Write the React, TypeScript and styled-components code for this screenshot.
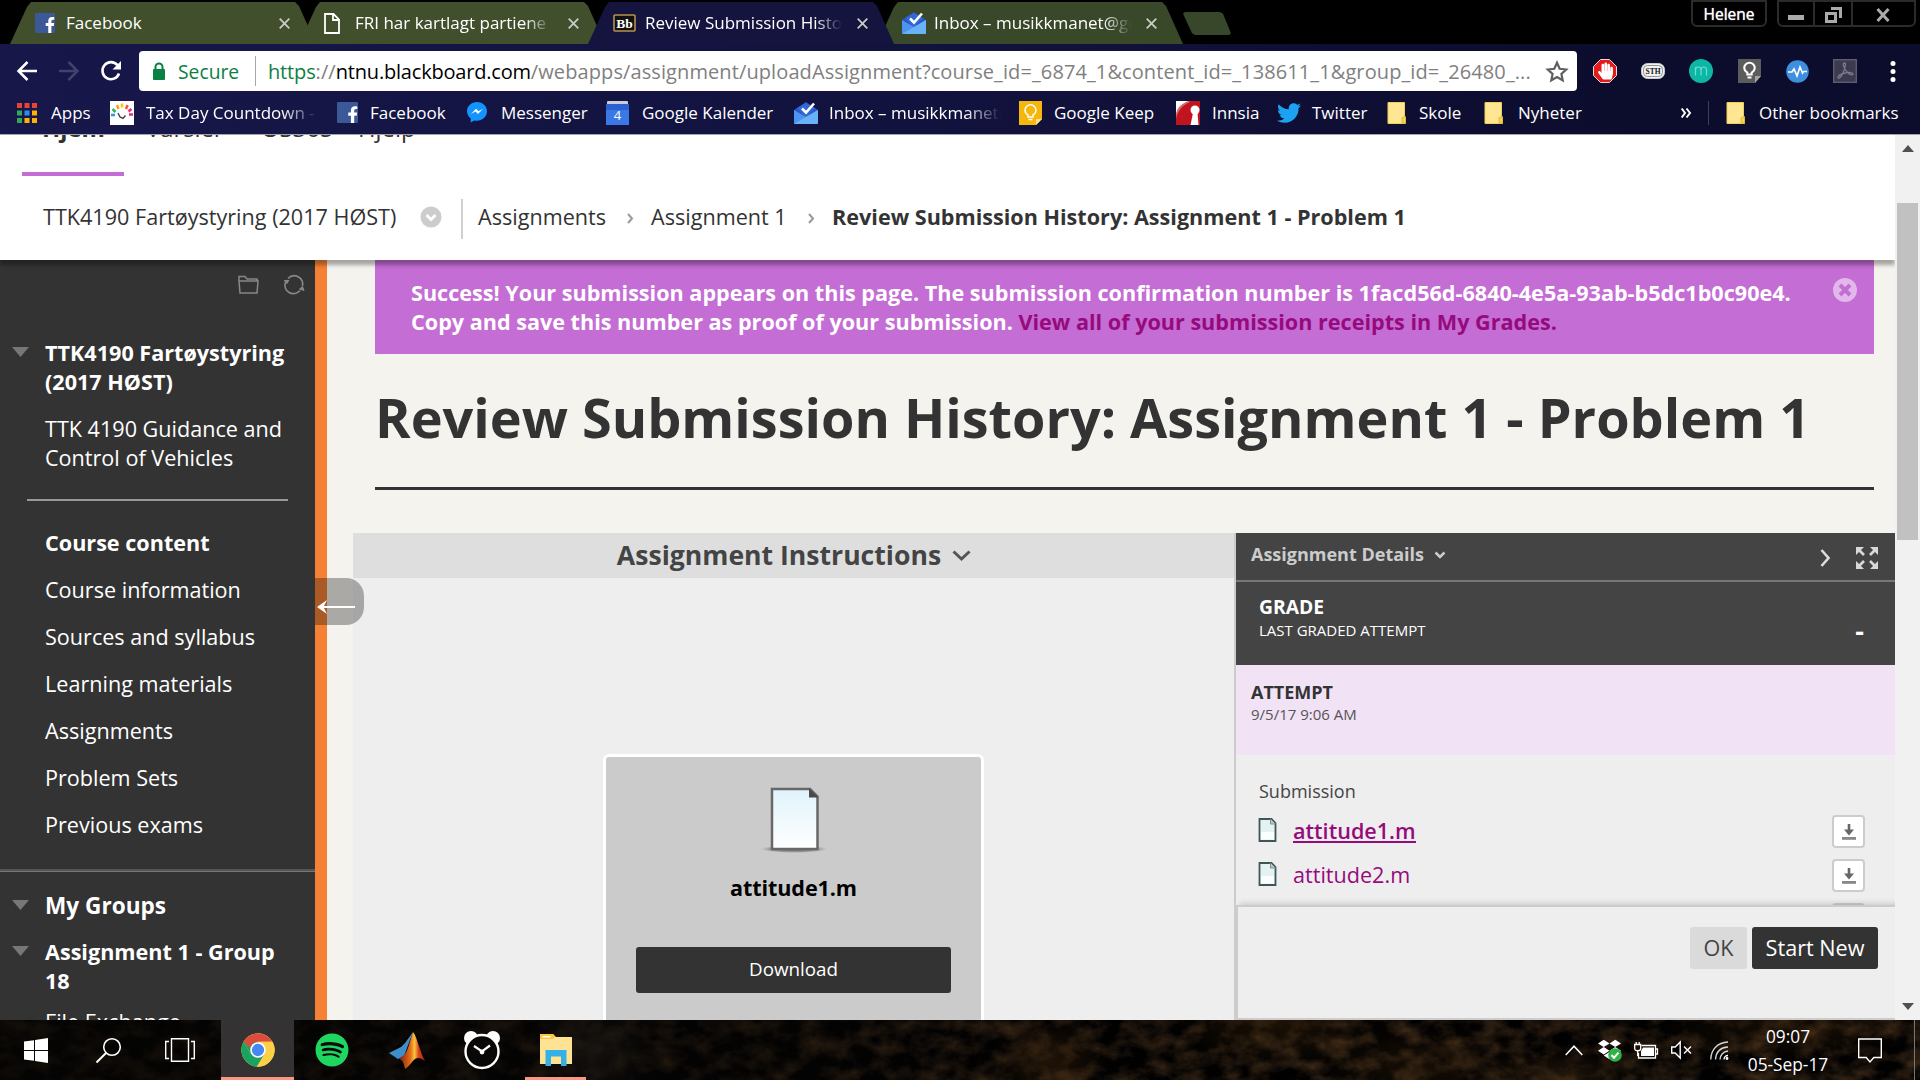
import React from 'react';
import styled, { createGlobalStyle, css } from 'styled-components';
import { FaTwitter, FaSpotify, FaDropbox, FaHandPaper, FaFacebookF } from 'react-icons/fa';

const Global = createGlobalStyle`
  * { box-sizing: border-box; }
  html, body { margin: 0; padding: 0; background: #000; overflow: hidden; }
  body { font-family: "Open Sans", "Noto Sans", sans-serif; }
  svg { display: block; flex: none; overflow: visible; }
  h1, h2, p, ul { margin: 0; padding: 0; font-weight: inherit; }
`;

const Screen = styled.div`
  width: 1920px;
  height: 1080px;
  display: flex;
  flex-direction: column;
  overflow: hidden;
`;

/* ---------- Browser frame ---------- */

const TabStrip = styled.div`
  height: 44px;
  background: #000;
  display: flex;
  align-items: flex-start;
  padding: 2px 4px 0 10px;
`;

const Tab = styled.div<{ $active?: boolean; $order: number }>`
  width: 307px;
  height: 42px;
  margin-right: -18px;
  padding: 0 27px 0 25px;
  display: flex;
  align-items: center;
  position: relative;
  z-index: ${(p) => p.$order};
  color: #fff;
  background: ${(p) => (p.$active ? '#14143f' : p.$order === 1 ? '#3a482a' : '#414f2c')};
  clip-path: polygon(0 100%, 17px 5px, 21px 0, 285px 0, 289px 4px, 306px 100%);
`;

const TabIcon = styled.span<{ $w: number }>`
  width: ${(p) => p.$w}px;
  flex: none;
`;

const TabTitle = styled.span<{ $fade?: boolean }>`
  width: 199px;
  flex: none;
  overflow: hidden;
  white-space: nowrap;
  font-size: 17px;
  line-height: 24px;
  ${(p) =>
    p.$fade &&
    css`
      mask-image: linear-gradient(to right, #000 170px, transparent 197px);
    `}
`;

const TabClose = styled.span`
  margin-left: auto;
  flex: none;
`;

const NewTab = styled.div`
  width: 48px;
  height: 23px;
  margin: 10px 0 0 17px;
  background: #38462a;
  clip-path: polygon(0 8%, 2px 0, 37px 0, 40px 8%, 48px 92%, 46px 100%, 12px 100%, 9px 92%);
`;

const UserBadge = styled.div`
  margin: -2px 0 0 auto;
  width: 76px;
  height: 27px;
  border: 2px solid #2b2b2b;
  border-radius: 0 0 6px 6px;
  color: #fff;
  font-size: 15.5px;
  font-weight: 500;
  line-height: 25px;
  text-align: center;
  text-shadow: 0 0 1px #fff;
`;

const WindowButtons = styled.div`
  margin: -2px 0 0 10px;
  width: 139px;
  height: 27px;
  display: flex;
  border: 2px solid #2b2b2b;
  border-radius: 0 0 6px 6px;
`;

const WindowButton = styled.div<{ $w: number; $drop?: number }>`
  width: ${(p) => p.$w}px;
  padding-top: ${(p) => p.$drop ?? 0}px;
  display: flex;
  align-items: center;
  justify-content: center;
  & + & { border-left: 2px solid #2b2b2b; }
`;

const Toolbar = styled.div`
  height: 54px;
  display: flex;
  align-items: center;
  padding: 0 12px 0 16px;
  background: linear-gradient(to right, #17174a, #12123e 50%, #0c0c2d 85%);
`;

const NavButtons = styled.div`
  width: 123px;
  display: flex;
  gap: 20px;
`;

const AddressBar = styled.div`
  width: 1438px;
  height: 40px;
  flex: none;
  border-radius: 4px;
  background: #fff;
  display: flex;
  align-items: center;
  padding: 0 8px 0 14px;
  font-size: 20px;
  white-space: nowrap;
  color: #808080;
`;

const Secure = styled.span`
  width: 77px;
  margin-left: 13px;
  color: #0b8043;
  font-size: 19.3px;
`;

const AddressDivider = styled.span`
  width: 1px;
  height: 30px;
  background: #a8a8a8;
  margin-right: 12px;
`;

const Url = styled.span`
  width: 1278px;
  letter-spacing: 0.1px;
`;

const Scheme = styled.span`
  color: #0b8043;
  letter-spacing: -0.15px;
`;

const Host = styled.span`
  color: #000;
  letter-spacing: -0.2px;
`;

const Extensions = styled.div`
  margin-left: 16px;
  display: flex;
  align-items: center;
  gap: 24px;
`;

const ExtensionSlot = styled.span`
  width: 24px;
  flex: none;
  display: flex;
  justify-content: center;
`;

const BookmarksBar = styled.div`
  height: 37px;
  padding: 0 20px 7px 17px;
  display: flex;
  align-items: center;
  color: #fff;
  font-size: 17px;
  line-height: 24px;
  border-bottom: 1px solid #a5a4ad;
  background: linear-gradient(to right, #17174a, #12123e 50%, #0c0c2d 85%);
`;

const Bookmark = styled.div<{ $w: number }>`
  width: ${(p) => p.$w}px;
  flex: none;
  display: flex;
  align-items: center;
  white-space: nowrap;
`;

const BookmarkIcon = styled.span<{ $w: number }>`
  width: ${(p) => p.$w}px;
  flex: none;
`;

const BookmarkLabel = styled.span<{ $fade?: number }>`
  position: relative;
  top: 0.5px;
  ${(p) =>
    p.$fade &&
    css`
      width: ${p.$fade}px;
      overflow: hidden;
      mask-image: linear-gradient(to right, #000 ${p.$fade - 36}px, transparent ${p.$fade}px);
    `}
`;

const Overflow = styled.span`
  width: 27px;
  margin-left: 78px;
`;

const BookmarkDivider = styled.span`
  width: 1px;
  height: 24px;
  margin-right: 18px;
  background: #3f3f5c;
`;

/* ---------- Page ---------- */

const Viewport = styled.div`
  height: 885px;
  display: flex;
  background: #f5f3ee;
`;

const PageColumn = styled.div`
  width: 1895px;
  display: flex;
  flex-direction: column;
  overflow: hidden;
`;

const PageHeader = styled.header`
  height: 125px;
  flex: none;
  position: relative;
  z-index: 3;
  background: #fff;
  box-shadow: 0 5px 4px rgba(0, 0, 0, 0.33);
  color: #333;
  font-size: 21.6px;
  line-height: 29px;
`;

const TopNav = styled.nav`
  height: 41px;
  padding: 0 0 0 22px;
  display: flex;
  font-size: 23.8px;
`;

const TopNavItem = styled.a<{ $w: number; $active?: boolean }>`
  width: ${(p) => p.$w}px;
  height: 62px;
  margin-top: -21px;
  padding-left: ${(p) => (p.$active ? 20 : 0)}px;
  font-weight: ${(p) => (p.$active ? 700 : 400)};
  border-bottom: ${(p) => (p.$active ? '4px solid #c46dd4' : 'none')};
`;

const NavGap = styled.span`
  width: 22px;
`;

const Breadcrumbs = styled.div`
  height: 84px;
  padding: 0 0 3px 43px;
  display: flex;
  align-items: center;
  white-space: nowrap;
`;

const CourseCrumb = styled.span`
  width: 377px;
`;

const CrumbDivider = styled.span`
  width: 2px;
  height: 40px;
  margin: 4px 15px 0 19px;
  background: #d0d0d0;
`;

const Crumb = styled.span<{ $w?: number; $strong?: boolean }>`
  ${(p) => p.$w && `width: ${p.$w}px;`}
  font-weight: ${(p) => (p.$strong ? 700 : 400)};
`;

const CrumbArrow = styled.span`
  width: 24px;
  padding-top: 4px;
`;

const PageBody = styled.div`
  height: 760px;
  display: flex;
  position: relative;
`;

const Sidebar = styled.aside`
  width: 327px;
  height: 760px;
  flex: none;
  overflow: hidden;
  background: #333;
  border-right: 12px solid #f48134;
  color: #fff;
  font-size: 21.6px;
  line-height: 29px;
`;

const SidebarTools = styled.div`
  height: 78px;
  padding: 15px 11px 0 0;
  display: flex;
  justify-content: flex-end;
  gap: 25px;
`;

const MenuHeading = styled.div<{ $mb: number; $big?: boolean }>`
  margin-bottom: ${(p) => p.$mb}px;
  padding-left: 12px;
  display: flex;
  gap: 16px;
  font-weight: 700;
  font-size: ${(p) => (p.$big ? 22.6 : 21.6)}px;
  svg { margin-top: 9px; }
`;

const MenuItem = styled.div<{ $bold?: boolean; $mb?: number }>`
  margin: 0 19px ${(p) => p.$mb ?? 18}px 45px;
  font-weight: ${(p) => (p.$bold ? 700 : 400)};
`;

const MenuRule = styled.div`
  height: 2px;
  margin: 0 27px 27px;
  background: #999;
`;

const SectionRule = styled.div`
  height: 3px;
  margin-bottom: 19px;
  background: #555;
  border-bottom: 1px solid #777;
`;

const CollapseHandle = styled.div`
  position: absolute;
  left: 315px;
  top: 318px;
  width: 49px;
  height: 47px;
  padding: 22px 0 0 2px;
  border-radius: 0 18px 18px 0;
  background: rgba(0, 0, 0, 0.3);
`;

const Content = styled.main`
  flex: 1;
  display: flex;
  flex-direction: column;
`;

const Banner = styled.div`
  width: 1499px;
  height: 94px;
  flex: none;
  margin-left: 48px;
  padding: 18px 17px 0 36px;
  display: flex;
  justify-content: space-between;
  background: #c46dd4;
  color: #fff;
  font-size: 21.6px;
  line-height: 29px;
  font-weight: 700;
  white-space: nowrap;
`;

const BannerLink = styled.a`
  color: #960a7d;
`;

const PageTitle = styled.h1`
  width: 1499px;
  height: 136px;
  flex: none;
  margin-left: 48px;
  padding-top: 26px;
  border-bottom: 3px solid #333;
  color: #333;
  font-size: 54px;
  line-height: 74px;
  font-weight: 700;
  white-space: nowrap;
`;

const Panels = styled.div`
  flex: 1;
  margin: 43px 0 0 26px;
  display: flex;
  min-height: 0;
`;

const Preview = styled.section`
  width: 881px;
  height: 487px;
  background: #eee;
  display: flex;
  flex-direction: column;
  align-items: center;
  overflow: hidden;
`;

const PreviewHeader = styled.h2`
  width: 100%;
  height: 45px;
  flex: none;
  margin-bottom: 176px;
  padding: 0 0 1px 1px;
  display: flex;
  align-items: center;
  justify-content: center;
  gap: 11px;
  background: #dedede;
  color: #444;
  font-size: 26.6px;
  line-height: 36px;
  font-weight: 700;
`;

const FileCard = styled.div`
  width: 381px;
  height: 320px;
  flex: none;
  padding-top: 30px;
  display: flex;
  flex-direction: column;
  align-items: center;
  border: 3px solid #fff;
  border-radius: 6px;
  background: #cbcbcb;
`;

const FileName = styled.div`
  margin-top: 20px;
  color: #000;
  font-size: 21.6px;
  line-height: 30px;
  font-weight: 700;
  letter-spacing: -0.1px;
`;

const DownloadButton = styled.button`
  width: 315px;
  height: 46px;
  margin-top: 44px;
  padding: 0 0 3px;
  border: 0;
  border-radius: 3px;
  background: #333;
  color: #fff;
  font: 400 18.8px "Open Sans", sans-serif;
`;

const Details = styled.section`
  width: 661px;
  height: 487px;
  border-left: 2px solid #ccc;
  background: #eee;
  display: flex;
  flex-direction: column;
  overflow: hidden;
`;

const DetailsHeader = styled.div`
  height: 49px;
  flex: none;
  padding: 0 17px 0 15px;
  display: flex;
  align-items: center;
  border-bottom: 2px solid #777;
  background: #444;
`;

const DetailsTitle = styled.span`
  flex: 1;
  padding-bottom: 4px;
  display: flex;
  align-items: center;
  gap: 10px;
  color: #ccc;
  font-size: 18px;
  line-height: 25px;
  font-weight: 700;
`;

const DetailsTools = styled.span`
  padding-top: 2px;
  display: flex;
  align-items: center;
  gap: 25px;
`;

const Grade = styled.div`
  height: 83px;
  flex: none;
  padding: 12px 31px 0 23px;
  display: flex;
  justify-content: space-between;
  background: #444;
  color: #fff;
`;

const GradeLabel = styled.div`
  font-size: 19.3px;
  line-height: 26px;
  font-weight: 700;
`;

const GradeNote = styled.div`
  font-size: 15px;
  line-height: 20px;
`;

const GradeValue = styled.div`
  padding-top: 19px;
  font-size: 27px;
  line-height: 36px;
  font-weight: 700;
`;

const Attempt = styled.div`
  height: 90px;
  flex: none;
  padding: 15px 0 0 15px;
  background: #f2e2f6;
  color: #333;
  font-size: 18px;
  line-height: 24px;
  font-weight: 700;
`;

const AttemptDate = styled.div`
  color: #555;
  font-size: 15px;
  line-height: 20px;
  font-weight: 400;
`;

const FileList = styled.div`
  height: 150px;
  flex: none;
  padding: 24px 30px 0 22px;
  overflow: hidden;
`;

const FileListLabel = styled.div`
  height: 30px;
  padding-left: 1px;
  color: #444;
  font-size: 18px;
  line-height: 25px;
`;

const FileRow = styled.div`
  height: 44px;
  display: flex;
  align-items: center;
  svg:first-child { margin-top: -3px; }
`;

const FileLink = styled.a<{ $current?: boolean }>`
  margin: -3px 0 0 16px;
  color: #960a7d;
  font-size: 21.6px;
  line-height: 29px;
  font-weight: ${(p) => (p.$current ? 600 : 400)};
  border-bottom: 2px solid ${(p) => (p.$current ? '#960a7d' : 'transparent')};
  height: 27px;
`;

const RowButton = styled.span`
  width: 33px;
  height: 33px;
  margin-left: auto;
  display: flex;
  align-items: center;
  justify-content: center;
  border: 2px solid #ccc;
  border-radius: 4px;
  background: #fff;
`;

const ButtonGlyph = styled.span`
  padding: 4px 0 0 1px;
`;

const DetailsFooter = styled.div`
  height: 115px;
  flex: none;
  padding: 20px 17px 0;
  display: flex;
  align-items: flex-start;
  justify-content: flex-end;
  gap: 5px;
  position: relative;
  border: 2px solid #ccc;
  border-right: 0;
  background: #eee;
  box-shadow: 4px -2px 5px rgba(0, 0, 0, 0.14);
`;

const FooterButton = styled.button<{ $w: number; $primary?: boolean }>`
  width: ${(p) => p.$w}px;
  height: 42px;
  padding: 0;
  border: 0;
  border-radius: 3px;
  background: ${(p) => (p.$primary ? '#333' : '#dadada')};
  color: ${(p) => (p.$primary ? '#fff' : '#444')};
  font: 400 21.6px/40px "Open Sans", sans-serif;
`;

const Scrollbar = styled.div`
  width: 25px;
  padding: 10px 2px;
  display: flex;
  flex-direction: column;
  align-items: center;
  background: #f1f1f1;
`;

const ScrollThumb = styled.div`
  width: 21px;
  height: 337px;
  margin: 51px 0 auto;
  background: #c1c1c1;
`;

/* ---------- Taskbar ---------- */

const TaskbarRoot = styled.div`
  height: 60px;
  display: flex;
  position: relative;
  overflow: hidden;
  background: #080706;
`;

const RockTexture = styled.svg`
  position: absolute;
  inset: 0;
`;

const TaskbarItems = styled.div`
  position: relative;
  width: 100%;
  display: flex;
  align-items: stretch;
  background:
    radial-gradient(60px 40px at 1050px 40px, rgba(86, 52, 16, 0.35), transparent),
    radial-gradient(110px 50px at 1280px 0, rgba(80, 50, 16, 0.35), transparent),
    radial-gradient(110px 40px at 1420px 45px, rgba(70, 44, 16, 0.3), transparent),
    radial-gradient(80px 30px at 1560px 58px, rgba(86, 58, 24, 0.35), transparent),
    radial-gradient(130px 30px at 1790px 10px, rgba(70, 44, 12, 0.3), transparent),
    radial-gradient(70px 50px at 590px 30px, rgba(44, 38, 32, 0.4), transparent);
`;

const TaskButton = styled.div<{ $w: number; $active?: boolean; $open?: boolean }>`
  width: ${(p) => p.$w}px;
  flex: none;
  display: flex;
  align-items: center;
  justify-content: center;
  background: ${(p) => (p.$active ? '#343232' : 'transparent')};
  border-top: 3px solid ${(p) => (p.$active ? '#343232' : 'transparent')};
  border-bottom: 3px solid ${(p) => (p.$active || p.$open ? '#fb9682' : 'transparent')};
`;

const TaskGap = styled.div`
  width: 5px;
  flex: none;
`;

const Tray = styled.div`
  margin-left: auto;
  display: flex;
  align-items: center;
  color: #fff;
`;

const TrayIcon = styled.span<{ $w: number }>`
  width: ${(p) => p.$w}px;
`;

const Clock = styled.div`
  width: 112px;
  margin-right: 14px;
  padding-top: 1px;
  text-align: center;
  font-size: 17.3px;
  line-height: 28px;
`;

const ShowDesktop = styled.div`
  width: 6px;
  height: 60px;
  margin-left: 32px;
  border-left: 1px solid #777;
`;

/* ---------- Drawings ---------- */

const Facebook = ({ w }: { w: number }) => (
  <svg width={w} height={w} viewBox="0 0 20 20">
    <rect width="20" height="20" rx="1" fill="#3b5998" />
    <g transform="translate(7 4)"><FaFacebookF size={16} color="#fff" /></g>
  </svg>
);
const CloseX = () => (
  <svg width="11" height="11" viewBox="0 0 11 11">
    <path d="M.7.7l9.6 9.6M10.3.7L.7 10.3" stroke="#c9cbc5" strokeWidth="1.8" />
  </svg>
);
const BlankPage = () => (
  <svg width="16" height="21" viewBox="0 0 16 21" fill="none" stroke="#fff" strokeWidth="1.8">
    <path d="M1 1h8.5l5.5 5.5v13.5H1zM9 1v6h6" />
  </svg>
);
const Blackboard = () => (
  <svg width="23" height="18" viewBox="0 0 23 18">
    <rect x="1" y="1" width="21" height="16" rx="1" fill="#111" stroke="#b8924b" strokeWidth="1.6" />
    <text x="11.5" y="13.5" fill="#fff" fontFamily="Liberation Serif, serif" fontSize="13.5" fontWeight="700" textAnchor="middle">Bb</text>
  </svg>
);
const InboxIcon = () => (
  <svg width="24" height="24" viewBox="0 0 24 24">
    <path d="M0 9L12 1l12 8v13a1 1 0 0 1-1 1H1a1 1 0 0 1-1-1z" fill="#2a56c6" />
    <path d="M3 7l9-5 9 5-9 10z" fill="#3367d6" />
    <path d="M0 9l12 7L24 9v13a1 1 0 0 1-1 1H1a1 1 0 0 1-1-1z" fill="#4d94f0" />
    <path d="M0 23L24 9v13l-1 1z" fill="#69b2f8" />
    <path d="M8 7.5l4 4 8-9" fill="none" stroke="#fff" strokeWidth="2.6" />
  </svg>
);
const AppsGrid = () => (
  <svg width="20" height="20" viewBox="0 0 20 20">
    {['#ea4335', '#ea4335', '#ea4335', '#34a853', '#2e8cf0', '#fbb405', '#34a853', '#fbb405', '#fbb405'].map((c, i) => (
      <rect key={i} x={(i % 3) * 7.5} y={Math.floor(i / 3) * 7.5} width="5" height="5" fill={c} />
    ))}
  </svg>
);
const TaxIcon = () => (
  <svg width="24" height="24" viewBox="0 0 24 24" fill="none" strokeWidth="2.6">
    <rect width="24" height="24" fill="#fff" />
    <path d="M7 4l1.5 4" stroke="#f9a01b" />
    <path d="M12 2.5v4" stroke="#f6c915" />
    <path d="M17.5 4L16 8" stroke="#f15a3a" />
    <path d="M2.5 8l3 3" stroke="#35b558" />
    <path d="M1 14h4" stroke="#2f9be8" />
    <path d="M21.5 8l-3 2.5" stroke="#e8317a" />
    <path d="M19 13.5h4" stroke="#e8317a" />
    <path d="M8 12l2 4 3 1.5 2.5-3" stroke="#444" strokeWidth="1.4" />
  </svg>
);
const MessengerIcon = () => (
  <svg width="20" height="21" viewBox="0 0 20 21">
    <path d="M10 0C4.5 0 0 4 0 9.200c0 3 1.5 5.5 3.700 7.200v4l3.600-2c.9.2 1.800.3 2.700.3 5.500 0 10-4.100 10-9.400S15.500 0 10 0z" fill="#1493ff" />
    <path d="M4 12l5-5.300 2.600 2.600L16 6.700 11 12 8.500 9.400z" fill="#fff" />
  </svg>
);
const CalendarIcon = () => (
  <svg width="23" height="24" viewBox="0 0 23 24">
    <rect x="1" width="21" height="4" rx="1" fill="#c9cdd4" />
    <path d="M0 3h23v21H0z" fill="#3b78e7" />
    <path d="M0 3h23v6H0z" fill="#2c5fd1" />
    <text x="11.5" y="19" fill="#fff" fontSize="13" textAnchor="middle">4</text>
  </svg>
);
const KeepIcon = () => (
  <svg width="23" height="24" viewBox="0 0 23 24">
    <path d="M0 0h23v18l-6 6H0z" fill="#f6b70c" />
    <path d="M23 18l-6 6v-6z" fill="#fde293" />
    <path d="M9 16v-2c-2-1.200-3-2.600-3-4.700a5.500 5.500 0 0 1 11 0c0 2.100-1 3.500-3 4.700v2zM9.500 18.500h4" fill="none" stroke="#fff" strokeWidth="1.5" />
  </svg>
);
const InnsiaIcon = () => (
  <svg width="24" height="24" viewBox="0 0 24 24">
    <rect width="24" height="24" fill="#c2141f" />
    <path d="M0 14C1 6 7 2 13 0H0z" fill="#fff" />
    <path d="M13 0C7 2 1 6 0 14v4C2 9 7 4 14 1z" fill="#e3a0a6" opacity=".6" />
    <circle cx="19" cy="9" r="4.500" fill="#fff" />
    <path d="M17 12h4.500l1 12h-8z" fill="#fff" />
  </svg>
);
const FolderIcon = () => (
  <svg width="18" height="22" viewBox="0 0 18 22">
    <path d="M0 .5h16.500v14l1 1.500v5.500H0z" fill="#fee693" stroke="#eed058" />
    <path d="M14 21v-5.500l3.500-1V21z" fill="#f6d44f" stroke="#d9b43a" strokeWidth=".8" />
  </svg>
);
const extensions = [
  <svg width="24" height="24" viewBox="0 0 24 24">
    <path d="M7.500.5h9l7 7v9l-7 7h-9l-7-7v-9z" fill="#e31b1b" stroke="#f3dada" />
    <g transform="translate(4 3.500)"><FaHandPaper size={17} color="#fff" /></g>
  </svg>,
  <svg width="24" height="16" viewBox="0 0 24 16">
    <rect x=".5" y=".5" width="23" height="15" rx="6" fill="#f2f2f2" stroke="#ccc" />
    <rect x="2.500" y="2.500" width="19" height="11" rx="4" fill="none" stroke="#777" strokeWidth=".8" />
    <text x="12" y="10.800" fill="#111" fontFamily="Liberation Serif, serif" fontSize="7.500" fontWeight="700" textAnchor="middle">STH</text>
  </svg>,
  <svg width="24" height="24" viewBox="0 0 24 24">
    <circle cx="12" cy="12" r="12" fill="#0cb7a6" />
    <path d="M6.500 16.500V8M6.500 11c0-4 5.500-4 5.500 0v5.500M12 11c0-4 5.500-4 5.500 0v5.500" fill="none" stroke="#74dccf" strokeWidth="1.2" />
  </svg>,
  <svg width="23" height="24" viewBox="0 0 23 24">
    <path d="M0 0h23v17l-6 7H0z" fill="#5c5c5c" />
    <path d="M23 17l-6 7v-7z" fill="#a3a3a3" />
    <path d="M9.300 15.500v-2c-2-1.200-3-2.400-3-4.500a5.200 5.200 0 0 1 10.400 0c0 2.100-1 3.300-3 4.500v2zM9.500 18.500h4" fill="none" stroke="#fff" strokeWidth="2" />
  </svg>,
  <svg width="23" height="23" viewBox="0 0 23 23">
    <circle cx="11.500" cy="11.500" r="11.300" fill="#3f8fe0" />
    <path d="M2 12h4l2-3 3 7 3-9 2.500 6 1-1.500H21" fill="none" stroke="#fff" strokeWidth="1.6" />
  </svg>,
  <svg width="24" height="24" viewBox="0 0 24 24">
    <rect x=".7" y=".7" width="22.600" height="22.600" fill="#3b3a4e" stroke="#5d5c70" strokeWidth="1.4" />
    <path d="M11.500 4c-3 0 0 6 2.500 9s6 3.500 6 2-4-2-8-1-7 3-7 4.500 3 .5 5-4.500 3.500-10 1.500-10z" fill="none" stroke="#7b7a8e" strokeWidth="1.300" />
  </svg>,
  <svg width="6" height="21" viewBox="0 0 6 21" fill="#fff"><circle cx="3" cy="2.500" r="2.500" /><circle cx="3" cy="10.500" r="2.500" /><circle cx="3" cy="18.500" r="2.500" /></svg>,
];
const Down = ({ w, h, c, sw = 3 }: { w: number; h: number; c: string; sw?: number }) => (
  <svg width={w} height={h} viewBox={`0 0 ${w} ${h}`}>
    <path d={`M1.5 1.5L${w / 2} ${h - 2}L${w - 1.5} 1.5`} fill="none" stroke={c} strokeWidth={sw} />
  </svg>
);
const Triangle = () => (
  <svg width="17" height="10" viewBox="0 0 17 10"><path d="M0 0h17L8.500 10z" fill="#777" /></svg>
);
const CrumbChevron = () => (
  <svg width="7" height="11" viewBox="0 0 7 11"><path d="M1 1l4 4.500L1 10" fill="none" stroke="#999" strokeWidth="2" /></svg>
);
const BigFile = () => (
  <svg width="68" height="66" viewBox="0 0 68 66">
    <defs>
      <linearGradient id="sheet" x1="0" y1="0" x2="0" y2="1"><stop offset="0" stopColor="#e1f3fc" /><stop offset="1" stopColor="#fff" /></linearGradient>
      <radialGradient id="ground"><stop offset="0" stopColor="#555" /><stop offset=".7" stopColor="#888" stopOpacity=".8" /><stop offset="1" stopColor="#aaa" stopOpacity="0" /></radialGradient>
    </defs>
    <ellipse cx="34" cy="62" rx="34" ry="4" fill="url(#ground)" />
    <path d="M12 2h38l7.500 7.500V62H12z" fill="url(#sheet)" stroke="#686868" strokeWidth="2.500" />
    <path d="M49 1l9.500 9.500H49z" fill="#4a4a4a" />
  </svg>
);
const SmallFile = () => (
  <svg width="19" height="24" viewBox="0 0 19 24">
    <path d="M1.500 1h12l4 4v18h-16z" fill="#e4f2f2" stroke="#3f5557" strokeWidth="1.800" />
    <path d="M3 14h13v7.500H3z" fill="#fbfefe" />
    <path d="M12.500 1v5h5" fill="#b9cccc" stroke="#7d9293" />
  </svg>
);
const DownloadGlyph = () => (
  <ButtonGlyph>
    <svg width="14" height="16" viewBox="0 0 14 16">
      <path d="M5.700 0h2.600v5.500H12L7 11.500 2 5.500h3.700z" fill="#666" />
      <path d="M0 13h14v2.800H0z" fill="#888" />
    </svg>
  </ButtonGlyph>
);
const Expand = () => (
  <svg width="22" height="22" viewBox="0 0 22 22" fill="#d8d8d8" stroke="#d8d8d8" strokeWidth="2.600">
    {[0, 90, 180, 270].map((a) => (
      <g key={a} transform={`rotate(${a} 11 11)`}><path d="M0 0h8L0 8z" stroke="none" /><path d="M3 3l5 5" fill="none" /></g>
    ))}
  </svg>
);
const Caret = ({ up }: { up?: boolean }) => (
  <svg width="12" height="7" viewBox="0 0 12 7"><path d={up ? 'M0 7h12L6 0z' : 'M0 0h12L6 7z'} fill="#505050" /></svg>
);

const ChromeLogo = () => (
  <svg width="34" height="34" viewBox="0 0 48 48">
    <circle cx="24" cy="24" r="23.500" fill="#fdd045" />
    <path d="M3.700 12.200A23.500 23.500 0 0 0 22.500 47.400L33.500 29.500 24 24 14 30z" fill="#1aa260" />
    <path d="M3.700 12.200L14 30l10-6V12.500z" fill="#1aa260" />
    <path d="M3.700 12.200A23.500 23.500 0 0 1 44.400 12.500H24a11 11 0 0 0-10.500 9z" fill="#dd4b3e" />
    <path d="M44.400 12.500H26l8 16-11.500 19A23.500 23.500 0 0 0 44.400 12.500z" fill="#fdd045" />
    <circle cx="24" cy="24" r="11" fill="#fff" />
    <circle cx="24" cy="24" r="8.700" fill="#4587f3" />
  </svg>
);
const Matlab = () => (
  <svg width="36" height="38" viewBox="0 0 36 38">
    <defs>
      <linearGradient id="peak" x1="0" y1="0" x2="1" y2="0"><stop offset="0" stopColor="#7b1d10" /><stop offset=".45" stopColor="#e8701c" /><stop offset=".6" stopColor="#fbc53a" /><stop offset=".75" stopColor="#d9451c" /><stop offset="1" stopColor="#a32313" /></linearGradient>
    </defs>
    <path d="M0 22l10-5c4-1 8-8 14-16l-9 24-6 3z" fill="#3d8fcb" />
    <path d="M10 28l6-5c4-6 5-14 8-22 4 4 6 18 12 29-4-3-7-4-10-2s-5 7-10 10c-1-5-2-9-6-10z" fill="url(#peak)" />
  </svg>
);
const AlarmClock = () => (
  <svg width="36" height="40" viewBox="0 0 36 40">
    <circle cx="7" cy="8" r="7" fill="#fff" /><circle cx="29" cy="8" r="7" fill="#fff" />
    <circle cx="18" cy="21.500" r="16.500" fill="#090807" stroke="#fff" strokeWidth="2.400" />
    <path d="M10 16l8 5.500 8-6" fill="none" stroke="#fff" strokeWidth="2.200" />
    <circle cx="18" cy="22" r="2.400" fill="#fff" />
  </svg>
);
const Explorer = () => (
  <svg width="32" height="32" viewBox="0 0 32 32">
    <path d="M0 0h13l3 3h16v27H0z" fill="#fee492" /><path d="M0 0h13l2 3-2 2H0z" fill="#f9c842" />
    <path d="M2.500 2h8v1.500h-8z" fill="#fff" />
    <path d="M5.500 32V16h21v16H21v-9.500H11V32z" fill="#35b0e6" />
  </svg>
);

const tabs = [
  { title: 'Facebook', icon: <Facebook w={20} />, slot: 31 },
  { title: 'FRI har kartlagt partiene -', icon: <BlankPage />, slot: 31, fade: true },
  { title: 'Review Submission Histor', icon: <Blackboard />, slot: 32, fade: true, active: true },
  { title: 'Inbox – musikkmanet@gr', icon: <InboxIcon />, slot: 32, fade: true },
];

const bookmarks = [
  { label: 'Apps', icon: <AppsGrid />, slot: 34, w: 93 },
  { label: 'Tax Day Countdown -', icon: <TaxIcon />, slot: 36, w: 227, fade: 172 },
  { label: 'Facebook', icon: <Facebook w={21} />, slot: 33, w: 130 },
  { label: 'Messenger', icon: <MessengerIcon />, slot: 34, w: 139 },
  { label: 'Google Kalender', icon: <CalendarIcon />, slot: 36, w: 188 },
  { label: 'Inbox – musikkmanet@', icon: <InboxIcon />, slot: 35, w: 225, fade: 172 },
  { label: 'Google Keep', icon: <KeepIcon />, slot: 35, w: 157 },
  { label: 'Innsia', icon: <InnsiaIcon />, slot: 36, w: 101 },
  { label: 'Twitter', icon: <FaTwitter size={24} color="#1da1f2" />, slot: 35, w: 111 },
  { label: 'Skole', icon: <FolderIcon />, slot: 31, w: 97 },
  { label: 'Nyheter', icon: <FolderIcon />, slot: 33, w: 118 },
];

const menu = ['Course information', 'Sources and syllabus', 'Learning materials', 'Assignments', 'Problem Sets'];

export default function App() {
  return (
    <Screen>
      <Global />
      <TabStrip>
        {tabs.map((t, i) => (
          <Tab key={t.title} $active={t.active} $order={t.active ? 9 : 4 - i}>
            <TabIcon $w={t.slot}>{t.icon}</TabIcon>
            <TabTitle $fade={t.fade}>{t.title}</TabTitle>
            <TabClose><CloseX /></TabClose>
          </Tab>
        ))}
        <NewTab />
        <UserBadge>Helene</UserBadge>
        <WindowButtons>
          <WindowButton $w={34} $drop={8}>
            <svg width="16" height="5"><rect width="16" height="5" fill="#aaa" /></svg>
          </WindowButton>
          <WindowButton $w={38} $drop={3}>
            <svg width="17" height="16" viewBox="0 0 17 16" fill="none" stroke="#aaa" strokeWidth="3"><path d="M1.500 6.500h9v8h-9zM6 1.500h9.500V11" /></svg>
          </WindowButton>
          <WindowButton $w={62} $drop={2}>
            <svg width="14" height="12" viewBox="0 0 14 12"><path d="M1.500 0l11 12M12.500 0l-11 12" stroke="#aaa" strokeWidth="3" /></svg>
          </WindowButton>
        </WindowButtons>
      </TabStrip>

      <Toolbar>
        <NavButtons>
          <svg width="22" height="20" viewBox="0 0 22 20" fill="none" stroke="#fff" strokeWidth="2.500"><path d="M21 10H3M11.500 1L2.500 10l9 9" /></svg>
          <svg width="22" height="20" viewBox="0 0 22 20" fill="none" stroke="#42426c" strokeWidth="2.500"><path d="M1 10h18M10.500 1l9 9-9 9" /></svg>
          <svg width="22" height="20" viewBox="0 0 22 20" fill="none" stroke="#fff" strokeWidth="2.600"><path d="M17.500 4.200A8.500 8.500 0 1 0 19 12.500" /><path d="M21 0v8.500h-8.500z" fill="#fff" stroke="none" /></svg>
        </NavButtons>
        <AddressBar>
          <svg width="12" height="17" viewBox="0 0 12 17"><rect y="6" width="12" height="11" rx="1" fill="#0b8043" /><path d="M2.500 7V4a3.500 3.500 0 0 1 7 0v3" fill="none" stroke="#0b8043" strokeWidth="2" /></svg>
          <Secure>Secure</Secure>
          <AddressDivider />
          <Url>
            <Scheme>https</Scheme>://<Host>ntnu.blackboard.com</Host>
            /webapps/assignment/uploadAssignment?course_id=_6874_1&amp;content_id=_138611_1&amp;group_id=_26480_...
          </Url>
          <svg width="22" height="21" viewBox="0 0 22 21"><path d="M11 1.800l2.700 6 6.500.7-4.800 4.400 1.300 6.400L11 16l-5.700 3.300 1.300-6.400L1.800 8.500l6.500-.7z" fill="none" stroke="#5f5f5f" strokeWidth="2.200" /></svg>
        </AddressBar>
        <Extensions>
          {extensions.map((icon, i) => <ExtensionSlot key={i}>{icon}</ExtensionSlot>)}
        </Extensions>
      </Toolbar>

      <BookmarksBar>
        {bookmarks.map((b, i) => (
          <Bookmark key={i} $w={b.w}>
            <BookmarkIcon $w={b.slot}>{b.icon}</BookmarkIcon>
            <BookmarkLabel $fade={b.fade}>{b.label}</BookmarkLabel>
          </Bookmark>
        ))}
        <Overflow>
          <svg width="10" height="10" viewBox="0 0 10 10" fill="none" stroke="#fff" strokeWidth="2"><path d="M.7.5L4 5 .7 9.500M5.500.5L9 5 5.500 9.500" /></svg>
        </Overflow>
        <BookmarkDivider />
        <Bookmark $w={172}>
          <BookmarkIcon $w={32}><FolderIcon /></BookmarkIcon>
          <BookmarkLabel>Other bookmarks</BookmarkLabel>
        </Bookmark>
      </BookmarksBar>

      <Viewport>
        <PageColumn>
          <PageHeader>
            <TopNav>
              <TopNavItem $w={102} $active>Hjem</TopNavItem>
              <NavGap />
              <TopNavItem $w={115}>Varsler</TopNavItem>
              <TopNavItem $w={97}>OS365</TopNavItem>
              <TopNavItem $w={80}>Hjelp</TopNavItem>
            </TopNav>
            <Breadcrumbs>
              <CourseCrumb>TTK4190 Fartøystyring (2017 HØST)</CourseCrumb>
              <svg width="22" height="22" viewBox="0 0 22 22"><circle cx="11" cy="11" r="10.500" fill="#ccc" /><path d="M6.500 9l4.500 4.500L15.500 9" fill="none" stroke="#fff" strokeWidth="3" /></svg>
              <CrumbDivider />
              <Crumb $w={149}>Assignments</Crumb>
              <CrumbArrow><CrumbChevron /></CrumbArrow>
              <Crumb $w={157}>Assignment 1</Crumb>
              <CrumbArrow><CrumbChevron /></CrumbArrow>
              <Crumb $strong>Review Submission History: Assignment 1 - Problem 1</Crumb>
            </Breadcrumbs>
          </PageHeader>

          <PageBody>
            <Sidebar>
              <SidebarTools>
                <svg width="21" height="19" viewBox="0 0 21 19" fill="none" stroke="#888" strokeWidth="1.500"><path d="M2 18L1 6h19l-1 12zM1 6V1.500h6L9 4h10v2" /></svg>
                <svg width="20" height="19" viewBox="0 0 20 19" fill="none" stroke="#888" strokeWidth="1.600"><path d="M4 3.500A8.500 8.500 0 0 1 18.500 11M16 15.500A8.500 8.500 0 0 1 1.500 7" /><path d="M0 5l3 3.500L5 5M15.500 14l3-2.500 1.500 4z" fill="#888" strokeWidth="1" /></svg>
              </SidebarTools>
              <MenuHeading $mb={18}><Triangle /><span>TTK4190 Fartøystyring<br />(2017 HØST)</span></MenuHeading>
              <MenuItem $mb={27}>TTK 4190 Guidance and<br />Control of Vehicles</MenuItem>
              <MenuRule />
              <MenuItem $bold>Course content</MenuItem>
              {menu.map((m) => <MenuItem key={m}>{m}</MenuItem>)}
              <MenuItem $mb={30}>Previous exams</MenuItem>
              <SectionRule />
              <MenuHeading $mb={17} $big><Triangle /><span>My Groups</span></MenuHeading>
              <MenuHeading $mb={12}><Triangle /><span>Assignment 1 - Group<br />18</span></MenuHeading>
              <MenuItem>File Exchange</MenuItem>
            </Sidebar>

            <Content>
              <Banner>
                <p>
                  Success! Your submission appears on this page. The submission confirmation number is 1facd56d-6840-4e5a-93ab-b5dc1b0c90e4.<br />
                  Copy and save this number as proof of your submission. <BannerLink>View all of your submission receipts in My Grades.</BannerLink>
                </p>
                <svg width="24" height="24" viewBox="0 0 24 24"><circle cx="12" cy="12" r="12" fill="#e2b8ea" /><path d="M7 7l10 10M17 7L7 17" stroke="#c46dd4" strokeWidth="4" /></svg>
              </Banner>
              <PageTitle>Review Submission History: Assignment 1 - Problem 1</PageTitle>
              <Panels>
                <Preview>
                  <PreviewHeader>Assignment Instructions <Down w={19} h={11} c="#555" /></PreviewHeader>
                  <FileCard>
                    <BigFile />
                    <FileName>attitude1.m</FileName>
                    <DownloadButton>Download</DownloadButton>
                  </FileCard>
                </Preview>
                <Details>
                  <DetailsHeader>
                    <DetailsTitle>Assignment Details <Down w={12} h={8} c="#ccc" sw={2.5} /></DetailsTitle>
                    <DetailsTools>
                      <svg width="11" height="18" viewBox="0 0 11 18"><path d="M1.500 1l7 8-7 8" fill="none" stroke="#ddd" strokeWidth="2.600" /></svg>
                      <Expand />
                    </DetailsTools>
                  </DetailsHeader>
                  <Grade>
                    <div>
                      <GradeLabel>GRADE</GradeLabel>
                      <GradeNote>LAST GRADED ATTEMPT</GradeNote>
                    </div>
                    <GradeValue>-</GradeValue>
                  </Grade>
                  <Attempt>
                    ATTEMPT
                    <AttemptDate>9/5/17 9:06 AM</AttemptDate>
                  </Attempt>
                  <FileList>
                    <FileListLabel>Submission</FileListLabel>
                    <FileRow><SmallFile /><FileLink $current>attitude1.m</FileLink><RowButton><DownloadGlyph /></RowButton></FileRow>
                    <FileRow><SmallFile /><FileLink>attitude2.m</FileLink><RowButton><DownloadGlyph /></RowButton></FileRow>
                    <FileRow><RowButton /></FileRow>
                  </FileList>
                  <DetailsFooter>
                    <FooterButton $w={57}>OK</FooterButton>
                    <FooterButton $w={126} $primary>Start New</FooterButton>
                  </DetailsFooter>
                </Details>
              </Panels>
            </Content>
            <CollapseHandle>
              <svg width="38" height="14" viewBox="0 0 38 14"><path d="M3 7h35" stroke="#fff" strokeWidth="2.200" /><path d="M0 7L10 0 6.500 7 10 14z" fill="#fff" /></svg>
            </CollapseHandle>
          </PageBody>
        </PageColumn>
        <Scrollbar>
          <Caret up />
          <ScrollThumb />
          <Caret />
        </Scrollbar>
      </Viewport>

      <TaskbarRoot>
        <RockTexture width="1920" height="60">
          <defs>
            <filter id="rock" x="0" y="0" width="100%" height="100%" colorInterpolationFilters="sRGB">
              <feTurbulence type="fractalNoise" baseFrequency="0.04 0.06" numOctaves="5" seed="8" />
              <feColorMatrix values="0.55 0 0 0 -0.2  0.38 0 0 0 -0.14  0.2 0 0 0 -0.07  0 0 0 0 1" />
            </filter>
            <linearGradient id="fadeLeft"><stop offset="0" stopColor="#060504" stopOpacity=".7" /><stop offset=".4" stopColor="#060504" stopOpacity=".5" /><stop offset=".6" stopColor="#060504" stopOpacity="0" /></linearGradient>
          </defs>
          <rect width="1920" height="60" filter="url(#rock)" opacity=".8" />
          <rect width="1920" height="60" fill="url(#fadeLeft)" />
        </RockTexture>
        <TaskbarItems>
          <TaskButton $w={72}>
            <svg width="24" height="25" viewBox="0 0 24 25" fill="#fff"><path d="M0 3.500l10-1.300v9.800H0zM11 2l13-2v12H11zM0 13h10v9.800L0 21.500zM11 13h13v12l-13-2z" /></svg>
          </TaskButton>
          <TaskButton $w={72}>
            <svg width="25" height="25" viewBox="0 0 25 25" fill="none" stroke="#fff"><circle cx="16" cy="9" r="8.300" strokeWidth="1.600" /><path d="M10 15L.5 24.500" strokeWidth="2" /></svg>
          </TaskButton>
          <TaskButton $w={72}>
            <svg width="30" height="24" viewBox="0 0 30 24" fill="none" stroke="#fff" strokeWidth="1.400"><path d="M6.500.7h17v22.600h-17zM4 3.500H.7v17H4M26 3.500h3.300v17H26" /></svg>
          </TaskButton>
          <TaskGap />
          <TaskButton $w={73} $active><ChromeLogo /></TaskButton>
          <TaskButton $w={76}><FaSpotify size={34} color="#1ed760" /></TaskButton>
          <TaskButton $w={73}><Matlab /></TaskButton>
          <TaskButton $w={77}><AlarmClock /></TaskButton>
          <TaskGap />
          <TaskButton $w={61} $open><Explorer /></TaskButton>
          <Tray>
            <TrayIcon $w={33}><svg width="18" height="11" viewBox="0 0 18 11"><path d="M.7 10L9 1.200 17.300 10" fill="none" stroke="#fff" strokeWidth="1.500" /></svg></TrayIcon>
            <TrayIcon $w={36}>
              <svg width="24" height="24" viewBox="0 0 24 24"><FaDropbox size={23} color="#fff" /><circle cx="17" cy="17" r="6.800" fill="#2fb344" /><path d="M13.500 17l2.500 2.700 4.500-5" fill="none" stroke="#fff" strokeWidth="2" /></svg>
            </TrayIcon>
            <TrayIcon $w={37}>
              <svg width="24" height="17" viewBox="0 0 24 17" fill="none" stroke="#fff" strokeWidth="1.300"><path d="M7.500 3.500h14v12.500H4.500V11M22 7h1.500v5H22" /><path d="M9 5.500h11v8.500H7V9z" fill="#fff" stroke="none" /><path d="M.7 2.500h6v4c0 3-6 3-6 0zM2.200 2.500V0M5.200 2.500V0M3.700 9v5" /></svg>
            </TrayIcon>
            <TrayIcon $w={39}>
              <svg width="21" height="18" viewBox="0 0 21 18" fill="none" stroke="#fff" strokeWidth="1.400"><path d="M.7 6h3.500l5-5v16l-5-5H.7zM13 5.500l7 7M20 5.500l-7 7" /></svg>
            </TrayIcon>
            <TrayIcon $w={22}>
              <svg width="19" height="19" viewBox="0 0 19 19" fill="none" strokeWidth="1.400"><path d="M.8 18.500C1 8 8 1.500 18 1M5.500 18.500C6 11 10 6.500 18 6M10 18.500c0-4 3-8 8-8.500" stroke="#d5d5d5" /><path d="M14 18.500c0-2 1.500-4 4-4" stroke="#fff" /><circle cx="17" cy="17.500" r="1.400" fill="#fff" /></svg>
            </TrayIcon>
            <Clock>09:07<br />05-Sep-17</Clock>
            <TrayIcon $w={24}>
              <svg width="24" height="25" viewBox="0 0 24 25"><path d="M.7 1h22.600v18.500h-7.500L12 24l-3.800-4.500H.7z" fill="none" stroke="#fff" strokeWidth="1.400" /></svg>
            </TrayIcon>
            <ShowDesktop />
          </Tray>
        </TaskbarItems>
      </TaskbarRoot>
    </Screen>
  );
}
